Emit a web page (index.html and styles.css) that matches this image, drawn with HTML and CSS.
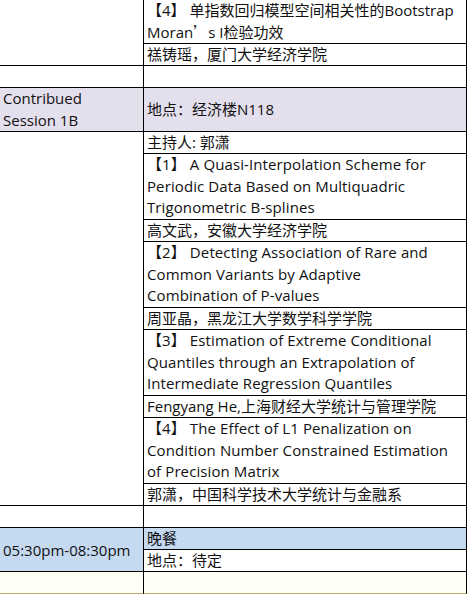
FILE: index.html
```html
<!DOCTYPE html>
<html lang="zh-CN">
<head>
<meta charset="utf-8">
<title>Schedule</title>
<link rel="stylesheet" href="styles.css">
</head>
<body>
<table class="sched">
  <colgroup><col class="c-left"><col class="c-right"></colgroup>
  <tr>
    <td class="left blank" rowspan="2"></td>
    <td class="right h-top">【4】 单指数回归模型空间相关性的Bootstrap<br>Moran<span class="cjk">’</span>s I检验功效</td>
  </tr>
  <tr><td class="right h1">禚铸瑶，厦门大学经济学院</td></tr>
  <tr><td class="left h1"></td><td class="right h1"></td></tr>
  <tr>
    <td class="left h2 lav">Contribued<br>Session 1B</td>
    <td class="right h2 lav">地点：经济楼N118</td>
  </tr>
  <tr>
    <td class="left blank" rowspan="9"></td>
    <td class="right h1">主持人: 郭潇</td>
  </tr>
  <tr><td class="right h3">【1】 A Quasi-Interpolation Scheme for<br>Periodic Data Based on Multiquadric<br>Trigonometric B-splines</td></tr>
  <tr><td class="right h1">高文武，安徽大学经济学院</td></tr>
  <tr><td class="right h3">【2】 Detecting Association of Rare and<br>Common Variants by Adaptive<br>Combination of P-values</td></tr>
  <tr><td class="right h1">周亚晶，黑龙江大学数学科学学院</td></tr>
  <tr><td class="right h3">【3】 Estimation of Extreme Conditional<br>Quantiles through an Extrapolation of<br>Intermediate Regression Quantiles</td></tr>
  <tr><td class="right h1">Fengyang He,上海财经大学统计与管理学院</td></tr>
  <tr><td class="right h3">【4】 The Effect of L1 Penalization on<br>Condition Number Constrained Estimation<br>of Precision Matrix</td></tr>
  <tr><td class="right h1">郭潇，中国科学技术大学统计与金融系</td></tr>
  <tr><td class="left h1"></td><td class="right h1"></td></tr>
  <tr>
    <td class="left blue time" rowspan="2">05:30pm-08:30pm</td>
    <td class="right h1 blue">晚餐</td>
  </tr>
  <tr><td class="right h1">地点：待定</td></tr>
  <tr class="last"><td class="left h1 cream"></td><td class="right h1 cream"></td></tr>
</table>
</body>
</html>
```

FILE: styles.css
```css
html, body {
  margin: 0;
  padding: 0;
  background: #ffffff;
}

.sched {
  border-collapse: separate;
  border-spacing: 0;
  width: 467px;
  table-layout: fixed;
  font-family: "Open Sans", "Noto Sans CJK SC", sans-serif;
  font-size: 15px;
  color: #111;
}

.c-left { width: 144px; }
.c-right { width: 323px; }

.sched td {
  padding: 0 0 0 3px;
  border-bottom: 1px solid #000;
  border-right: 1px solid #000;
  vertical-align: middle;
  box-sizing: content-box;
  overflow: hidden;
  white-space: nowrap;
}

.sched td.right { padding-left: 3px; padding-right: 2px; }

.cjk { font-family: "Noto Sans CJK SC", sans-serif; }

.h-top { height: 42px; line-height: 21px; }
.h1 { height: 21px; line-height: 21px; }
.h2 { height: 43px; line-height: 21.5px; }
.h3 { height: 65px; line-height: 21.667px; letter-spacing: 0.1px; }

.lav { background: #e4dfec; }
.blue { background: #c5d9f1; }
.cream { background: #fffff5; }

.time { height: 43px; padding-left: 4px; }

.last td { border-bottom-color: #b8b070; border-bottom-width: 2px; }
```
